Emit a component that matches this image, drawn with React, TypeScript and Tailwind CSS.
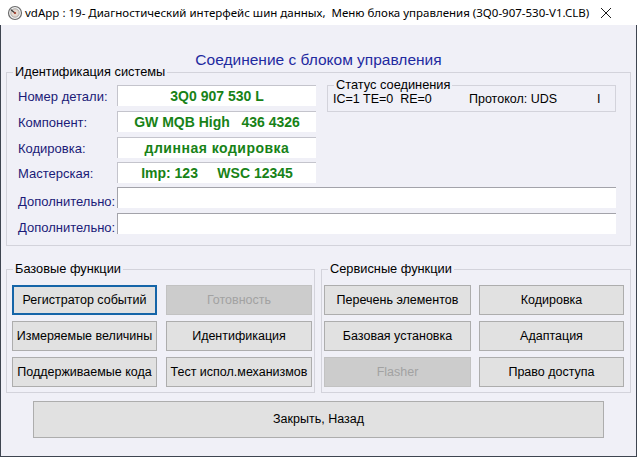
import React from "react";

const SANS = "font-['Liberation_Sans',Arial,sans-serif]";

function Label({ children, low }: { children: React.ReactNode; low?: boolean }) {
  return (
    <div
      className={
        low
          ? "w-[99px] shrink-0 pt-[8px] text-[13px] leading-none text-[#1b1b78]"
          : "w-[99px] shrink-0 pt-[2px] text-[13px] leading-none text-[#1b1b78]"
      }
    >
      {children}
    </div>
  );
}

function Val({ children, wide }: { children: React.ReactNode; wide?: boolean }) {
  return (
    <div
      className={
        wide
          ? "h-[21px] w-[199px] shrink-0 bg-white border-t border-l border-[#c4c4cc] flex items-center justify-center text-[14px] font-bold leading-none tracking-[0.5px] text-[#178217] whitespace-pre"
          : "h-[21px] w-[199px] shrink-0 bg-white border-t border-l border-[#c4c4cc] flex items-center justify-center text-[14px] font-bold leading-none text-[#178217] whitespace-pre"
      }
    >
      {children}
    </div>
  );
}

function Row({ label, children }: { label: string; children: React.ReactNode }) {
  return (
    <div className="h-[21px] flex items-center">
      <Label>{label}</Label>
      {children}
    </div>
  );
}

function Btn({
  children,
  disabled,
  focused,
}: {
  children: React.ReactNode;
  disabled?: boolean;
  focused?: boolean;
}) {
  const cls = disabled
    ? "bg-[#cccccc] border border-[#c2c2c2] text-[#a2a2a2]"
    : focused
    ? "bg-[#e1e1e1] border-2 border-[#1565a8] text-black"
    : "bg-[#e1e1e1] border border-[#adadad] text-black";
  return (
    <div className={`h-[30px] flex items-center justify-center text-[12.5px] leading-none whitespace-nowrap ${cls}`}>
      {children}
    </div>
  );
}

function AppIcon() {
  return (
    <svg width="16" height="16" viewBox="0 0 16 16">
      <circle cx="8" cy="8" r="6.5" fill="#f2f2f2" stroke="#6b6b6b" strokeWidth="1.2" />
      <circle cx="8" cy="8" r="4.2" fill="#e4d9d0" stroke="#9a9a9a" strokeWidth="0.8" />
      <line x1="8" y1="8" x2="4.2" y2="5" stroke="#3a3a3a" strokeWidth="1.3" strokeLinecap="round" />
      <circle cx="8" cy="8" r="1.1" fill="#b0402f" />
    </svg>
  );
}

export default function App() {
  return (
    <div className={`w-[637px] h-[457px] flex flex-col ${SANS}`}>
      {/* Title bar */}
      <div className="h-[25px] bg-white flex items-center pl-[7px] pr-[25px] shrink-0">
        <AppIcon />
        <div className="ml-[2px] flex-1 min-w-0 text-[11.5px] leading-none text-black whitespace-pre font-['Noto_Sans',sans-serif]">
          vdApp : 19- Диагностический интерфейс шин данных,  Меню блока управления (3Q0-907-530-V1.CLB)
        </div>
        <svg width="12" height="12" viewBox="0 0 12 12" className="shrink-0">
          <line x1="1" y1="1" x2="11" y2="11" stroke="#1a1a1a" strokeWidth="1" />
          <line x1="11" y1="1" x2="1" y2="11" stroke="#1a1a1a" strokeWidth="1" />
        </svg>
      </div>

      {/* Body */}
      <div className="flex-1 bg-[#f0f0f7] border-x border-b border-[#3e4550] px-[5px] flex flex-col">
        <div className="h-[41px] pt-[27px] text-center text-[15.5px] leading-[15px] text-[#1f2aa0] shrink-0">
          Соединение с блоком управления
        </div>

        {/* Identification group */}
        <fieldset className="border border-[#d3d3db] pl-[6px] pr-[14px] pt-[7px] pb-[11px] min-w-0">
          <legend className="px-[2px] text-[12.8px] leading-[12px] text-black">Идентификация системы</legend>
          <div className="pl-[5px] flex flex-col">
            <div className="flex">
              <div className="flex flex-col">
                <Row label="Номер детали:">
                  <Val>3Q0 907 530 L</Val>
                </Row>
                <div className="h-[5px]" />
                <Row label="Компонент:">
                  <Val>GW MQB High   436 4326</Val>
                </Row>
                <div className="h-[5px]" />
                <Row label="Кодировка:">
                  <Val wide>длинная кодировка</Val>
                </Row>
                <div className="h-[4px]" />
                <Row label="Мастерская:">
                  <Val>Imp: 123     WSC 12345</Val>
                </Row>
              </div>
              <fieldset className="ml-[11px] flex-1 self-start mt-[-6px] border border-[#d3d3db] pl-[5px] pr-[3px] pt-[1px] pb-[5px] min-w-0">
                <legend className="ml-[1px] px-[2px] text-[12.8px] leading-[12px] text-black">Статус соединения</legend>
                <div className="flex h-[14px] items-center text-[12.5px] leading-none text-black whitespace-pre">
                  <span className="w-[136px]">IC=1 TE=0  RE=0</span>
                  <span className="w-[128px]">Протокол: UDS</span>
                  <span>I</span>
                </div>
              </fieldset>
            </div>
            <div className="h-[4px]" />
            <div className="h-[21px] flex items-center">
              <Label low>Дополнительно:</Label>
              <div className="h-[21px] flex-1 bg-white border-t border-l border-[#a3a3aa]" />
            </div>
            <div className="h-[5px]" />
            <div className="h-[21px] flex items-center">
              <Label low>Дополнительно:</Label>
              <div className="h-[21px] flex-1 bg-white border-t border-l border-[#a3a3aa]" />
            </div>
          </div>
        </fieldset>

        {/* Function groups */}
        <div className="mt-[17px] flex gap-[6px]">
          <fieldset className="w-[309px] shrink-0 border border-[#d3d3db] pl-[5px] pr-[2px] pt-[10px] pb-[5px] min-w-0">
            <legend className="ml-[1px] px-[2px] text-[12.8px] leading-[12px] text-black">Базовые функции</legend>
            <div className="grid grid-cols-[145px_146px] gap-x-[9px] gap-y-[6px]">
              <Btn focused>Регистратор событий</Btn>
              <Btn disabled>Готовность</Btn>
              <Btn>Измеряемые величины</Btn>
              <Btn>Идентификация</Btn>
              <Btn>Поддерживаемые кода</Btn>
              <Btn>Тест испол.механизмов</Btn>
            </div>
          </fieldset>
          <fieldset className="flex-1 border border-[#d3d3db] pl-[2px] pr-[5px] pt-[10px] pb-[5px] min-w-0">
            <legend className="ml-[4px] px-[2px] text-[12.8px] leading-[12px] text-black">Сервисные функции</legend>
            <div className="grid grid-cols-[147px_145px] gap-x-[8px] gap-y-[6px]">
              <Btn>Перечень элементов</Btn>
              <Btn>Кодировка</Btn>
              <Btn>Базовая установка</Btn>
              <Btn>Адаптация</Btn>
              <Btn disabled>Flasher</Btn>
              <Btn>Право доступа</Btn>
            </div>
          </fieldset>
        </div>

        <div className="mt-[8px] ml-[27px] w-[571px] h-[37px] bg-[#e1e1e1] border border-[#adadad] flex items-center justify-center text-[12.5px] leading-none text-black">
          Закрыть, Назад
        </div>
      </div>
    </div>
  );
}
